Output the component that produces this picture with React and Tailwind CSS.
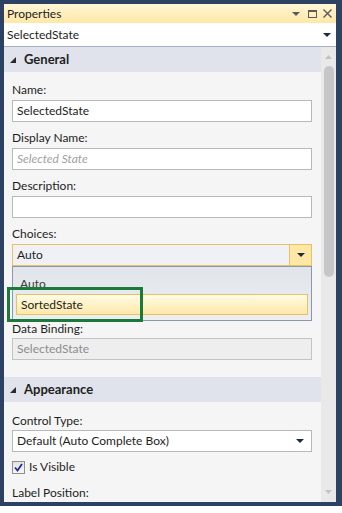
import React from 'react';

const Caret = ({ className = '' }) => (
  <svg width="8" height="4" viewBox="0 0 8 4" className={className}>
    <polygon points="0,0 8,0 4,4" fill="currentColor" />
  </svg>
);

const SectionHeader = ({ title }) => (
  <div className="h-[25px] bg-[#e0e3eb] flex items-center pl-[6px]">
    <svg width="6" height="6" viewBox="0 0 6 6" className="text-[#2a2a2a] mr-[8px] mt-[1px]">
      <polygon points="6,0 6,6 0,6" fill="currentColor" />
    </svg>
    <span className="text-[13px] font-bold text-[#1e1e1e]">{title}</span>
  </div>
);

const Field = ({ label, children, className = 'mt-[8px]' }) => (
  <div className={className}>
    <div className="h-[16px] leading-[16px] text-[12px] text-[#1e1e1e]">{label}</div>
    <div className="mt-[2px]">{children}</div>
  </div>
);

const TextBox = ({ value, placeholder, disabled }) => (
  <div
    className={
      'h-[22px] border flex items-center px-[4px] text-[12px] ' +
      (disabled ? 'bg-[#eeeeee] border-[#c3c3c3] text-[#8c8c8c]' : 'bg-white border-[#b8b8b8] text-[#1e1e1e]')
    }
  >
    {value}
    {placeholder && <span className="italic text-[#a0a0a0]">{placeholder}</span>}
  </div>
);

const App = () => {
  return (
    <div className="w-[342px] h-[513px] bg-white font-[Lato,'Noto_Sans',sans-serif]">
      <div className="h-[506px] border-t-4 border-l-4 border-b-4 border-r-[6px] border-[#2d4263] flex flex-col overflow-hidden">
        {/* title bar */}
        <div className="h-[19px] shrink-0 bg-gradient-to-b from-[#fff6d6] to-[#ffe8a6] flex items-center pl-[3px] pr-[4px] text-[12px] text-[#1e1e1e]">
          <span className="flex-1">Properties</span>
          <Caret className="text-[#5a5a5a] mr-[8px]" />
          <div className="w-[9px] h-[8px] border border-t-2 border-[#5a5a5a] mr-[6px]" />
          <svg width="9" height="9" viewBox="0 0 9 9" className="text-[#5a5a5a]">
            <path d="M0.5 0.5 L8.5 8.5 M8.5 0.5 L0.5 8.5" stroke="currentColor" strokeWidth="1.4" />
          </svg>
        </div>

        {/* object selector */}
        <div className="h-[24px] shrink-0 bg-white border-b border-[#a7b0bf] flex items-center pl-[3px] pr-[5px] text-[12px] text-[#1e1e1e]">
          <span className="flex-1">SelectedState</span>
          <Caret className="text-[#1e2a3e]" />
        </div>

        <div className="flex-1 flex min-h-0">
          {/* property list */}
          <div className="flex-1 bg-[#f5f5f5] overflow-hidden">
            <SectionHeader title="General" />
            <div className="pt-[2px] pl-[8px] pr-[9px]">
              <Field label="Name:">
                <TextBox value="SelectedState" />
              </Field>
              <Field label="Display Name:">
                <TextBox placeholder="Selected State" />
              </Field>
              <Field label="Description:">
                <TextBox />
              </Field>
              <Field label="Choices:">
                <div className="h-[22px] border border-[#e5c365] bg-[#eff1f7] flex text-[12px] text-[#1e1e1e]">
                  <div className="flex-1 flex items-center px-[4px]">Auto</div>
                  <div className="w-[22px] border-l border-[#e5c365] bg-[#ffe8a6] flex items-center justify-center">
                    <Caret className="text-[#1e2a3e]" />
                  </div>
                </div>
                {/* open drop-down list */}
                <div className="relative h-[55px] border border-[#8d97aa] bg-gradient-to-b from-[#e1e4ea] to-[#eceef2] px-[3px] pt-[8px] text-[12px] text-[#1e1e1e]">
                  <div className="h-[18px] leading-[18px] pl-[4px] text-[#3a3a3a]">Auto</div>
                  <div className="mt-[1px] h-[21px] border border-[#e5c365] bg-gradient-to-b from-[#fffbe5] to-[#ffe8a8] flex items-center pl-[4px]">
                    SortedState
                  </div>
                  <div className="absolute left-[-6px] top-[20px] w-[136px] h-[35px] border-[3px] border-[#1b7a3a]" />
                </div>
              </Field>
              <Field label="Data Binding:" className="mt-0">
                <div className="-mt-[1px]">
                  <TextBox value="SelectedState" disabled />
                </div>
              </Field>
            </div>

            <div className="mt-[17px]">
              <SectionHeader title="Appearance" />
            </div>
            <div className="pl-[8px] pr-[9px]">
              <Field label="Control Type:" className="mt-[11px]">
                <div className="-mt-[1px] h-[22px] border border-[#b8b8b8] bg-white flex items-center pl-[4px] pr-[7px] text-[12px] text-[#1e1e1e]">
                  <span className="flex-1">Default (Auto Complete Box)</span>
                  <Caret className="text-[#1e2a3e]" />
                </div>
              </Field>
              <div className="mt-[7px] h-[16px] flex items-center text-[12px] text-[#1e1e1e]">
                <div className="w-[13px] h-[13px] border border-[#8e8f8f] bg-gradient-to-b from-[#e4e4e4] to-[#f7f7f7] flex items-center justify-center mr-[4px]">
                  <svg width="9" height="9" viewBox="0 0 9 9">
                    <path d="M1 4.5 L3.5 7.5 L8 1" stroke="#232b8f" strokeWidth="1.8" fill="none" />
                  </svg>
                </div>
                Is Visible
              </div>
              <Field label="Label Position:" className="mt-[10px]">
                <div className="h-[22px] border border-[#b8b8b8] bg-white" />
              </Field>
            </div>
          </div>

          {/* scrollbar */}
          <div className="w-[15px] bg-[#e9e9e9] flex flex-col items-center">
            <div className="mt-[8px] h-[4px] flex items-end">
              <svg width="7" height="4" viewBox="0 0 7 4">
                <polygon points="0,4 7,4 3.5,0" fill="#c2c2c2" />
              </svg>
            </div>
            <div className="mt-[7px] w-[10px] h-[211px] rounded-[5px] bg-[#c6c6c8]" />
            <div className="flex-1" />
            <div className="mb-[8px]">
              <svg width="7" height="4" viewBox="0 0 7 4">
                <polygon points="0,0 7,0 3.5,4" fill="#c2c2c2" />
              </svg>
            </div>
          </div>
        </div>
      </div>
    </div>
  );
};

export default App;
